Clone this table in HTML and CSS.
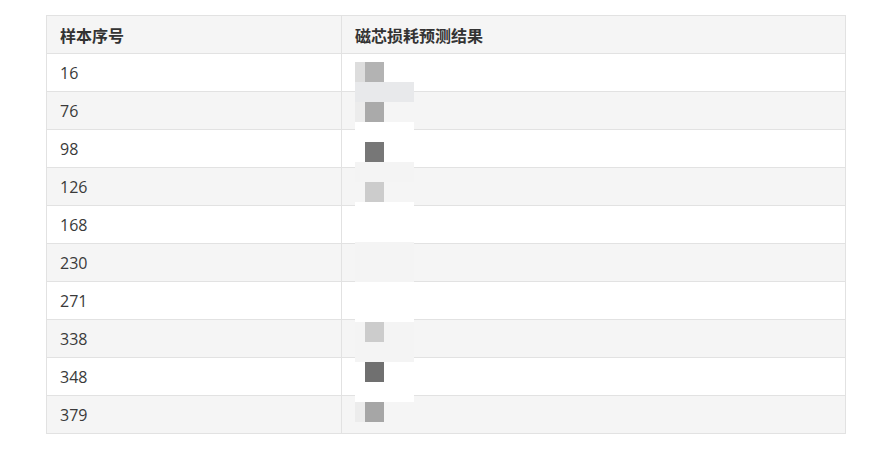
FILE: index.html
```html
<!DOCTYPE html>
<html lang="zh">
<head>
<meta charset="utf-8">
<title>磁芯损耗预测结果</title>
<link rel="stylesheet" href="styles.css">
</head>
<body>
<div class="wrap">
  <table class="result-table">
    <thead>
      <tr><th class="col-id">样本序号</th><th>磁芯损耗预测结果</th></tr>
    </thead>
    <tbody>
      <tr><td>16</td><td></td></tr>
      <tr><td>76</td><td></td></tr>
      <tr><td>98</td><td></td></tr>
      <tr><td>126</td><td></td></tr>
      <tr><td>168</td><td></td></tr>
      <tr><td>230</td><td></td></tr>
      <tr><td>271</td><td></td></tr>
      <tr><td>338</td><td></td></tr>
      <tr><td>348</td><td></td></tr>
      <tr><td>379</td><td></td></tr>
    </tbody>
  </table>
  <div class="glitch" aria-hidden="true">
    <div class="strip h20"><i class="l c-dd"></i><i class="sq c-b3"></i></div>
    <div class="strip h20 bg-e8"></div>
    <div class="strip h20"><i class="l c-ee"></i><i class="sq c-aa"></i></div>
    <div class="strip h20 bg-w"></div>
    <div class="strip h20 bg-w"><i class="l"></i><i class="sq c-77"></i></div>
    <div class="strip h20 bg-f4"></div>
    <div class="strip h20"><i class="l"></i><i class="sq c-cc"></i></div>
    <div class="strip h40 bg-w"></div>
    <div class="strip h40 bg-f4"></div>
    <div class="strip h40 bg-w"></div>
    <div class="strip h20 bg-f4"><i class="l"></i><i class="sq c-cc"></i></div>
    <div class="strip h20 bg-f4"></div>
    <div class="strip h20 bg-w"><i class="l"></i><i class="sq c-6f"></i></div>
    <div class="strip h20 bg-w"></div>
    <div class="strip h20"><i class="l c-ee"></i><i class="sq c-a6"></i></div>
  </div>
</div>
</body>
</html>
```

FILE: styles.css
```css
html, body {
  margin: 0;
  padding: 0;
  background: #ffffff;
}
body {
  padding: 15px 0 0 46px;
  font-family: "Open Sans", "Noto Sans", "Noto Sans CJK SC", sans-serif;
  color: #333333;
}
.wrap {
  position: relative;
  width: 800px;
}
.result-table {
  width: 800px;
  border-collapse: collapse;
  table-layout: fixed;
  font-size: 16px;
}
.result-table th,
.result-table td {
  border: 1px solid #e2e2e2;
  height: 38px;
  padding: 0 13px;
  box-sizing: border-box;
  text-align: left;
  vertical-align: middle;
  line-height: 20px;
}
.result-table th {
  font-weight: 600;
  font-family: "Noto Sans CJK SC", sans-serif;
  font-size: 16px;
  background: #f5f5f5;
  color: #333333;
}
.result-table .col-id {
  width: 295px;
}
.result-table tbody tr:nth-child(even) td {
  background: #f5f5f5;
}
.result-table td {
  color: #3a3a3a;
}
.glitch {
  position: absolute;
  left: 309px;
  top: 47px;
  width: 59px;
  display: flex;
  flex-direction: column;
}
.strip {
  display: flex;
  width: 59px;
}
.h20 { height: 20px; }
.h40 { height: 40px; }
.strip i {
  display: block;
  height: 20px;
}
.strip .l { width: 10px; }
.strip .sq { width: 19px; }
.bg-e8 { background: #e8e9eb; }
.bg-w { background: #ffffff; }
.bg-f4 { background: #f4f4f4; }
.c-dd { background: #dddddd; }
.c-ee { background: #ececec; }
.c-b3 { background: #b3b3b3; }
.c-aa { background: #aaaaaa; }
.c-77 { background: #777777; }
.c-cc { background: #cccccc; }
.c-6f { background: #707070; }
.c-a6 { background: #a6a6a6; }
```
